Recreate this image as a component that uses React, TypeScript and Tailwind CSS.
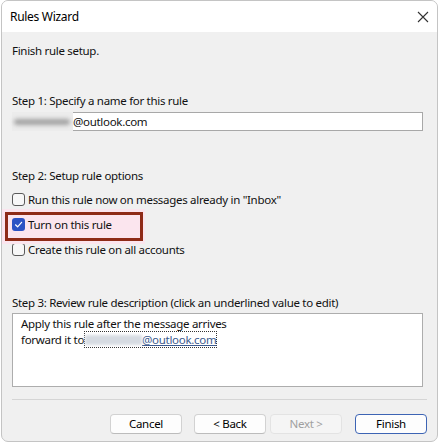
import React from 'react';

const font = { fontFamily: '"Noto Sans", "Liberation Sans", sans-serif' };

const CheckRow = ({ label, checked }: { label: string; checked?: boolean }) => (
  <div className="flex h-[25px] items-center gap-[3px]">
    {checked ? (
      <span className="flex h-[13px] w-[13px] items-center justify-center rounded-[3px] bg-[#2b52c4]">
        <svg width="9" height="9" viewBox="0 0 9 9" fill="none">
          <path d="M1.5 4.8 L3.6 6.8 L7.6 2.3" stroke="white" strokeWidth="1.2" strokeLinecap="round" strokeLinejoin="round" />
        </svg>
      </span>
    ) : (
      <span className="h-[13px] w-[13px] rounded-[3px] border border-[#5a5a5a] bg-[#f7f7f7]" />
    )}
    <span>{label}</span>
  </div>
);

const Btn = ({ label, primary, disabled }: { label: string; primary?: boolean; disabled?: boolean }) => (
  <button
    className={`h-[20px] w-[72px] rounded-[4px] border text-[11.5px] leading-none ${
      primary
        ? 'border-[#3d64b4] bg-[#fdfdfd] text-black'
        : disabled
          ? 'border-[#e3e3e3] bg-[#f5f5f5] text-[#a0a0a0]'
          : 'border-[#d2d2d2] border-b-[#bcbcbc] bg-[#fdfdfd] text-black'
    }`}
  >
    {label}
  </button>
);

export default function App() {
  return (
    <div className="h-[446px] w-[439px] bg-white text-[11.5px] tracking-[-0.3px] text-[#111]" style={font}>
      <div className="ml-[1px] flex h-[442px] w-[437px] flex-col overflow-hidden rounded-[7px] border border-[#c4c4c4] bg-[#f0f0f0]">
        <div className="flex h-[31px] shrink-0 items-center justify-between bg-white pl-[8px] pr-[8px]">
          <span className="text-[12px] text-black">Rules Wizard</span>
          <svg width="12" height="12" viewBox="0 0 12 12" className="text-[#333]">
            <path d="M1 1 L11 11 M11 1 L1 11" stroke="currentColor" strokeWidth="1.1" />
          </svg>
        </div>

        <div className="relative flex flex-col pl-[10px] leading-[16px]">
          <div className="mt-[11px]">Finish rule setup.</div>

          <div className="mt-[34px]">Step 1: Specify a name for this rule</div>
          <div className="mt-[3px] flex h-[19px] w-[411px] items-stretch">
            <div className="flex w-[61px] items-center bg-[#ececec]">
              <span className="ml-[2px] h-[6px] w-[56px] rounded-full bg-[#a2a2a2] blur-[2px]" />
            </div>
            <div className="flex flex-1 items-center border border-[#a8a8a8] border-l-0 bg-white">
              <span>@outlook.com</span>
            </div>
          </div>

          <div className="mt-[37px]">Step 2: Setup rule options</div>
          <div className="mt-[3px] flex flex-col">
            <CheckRow label={'Run this rule now on messages already in "Inbox"'} />
            <div className="relative">
              <div className="absolute -left-[10px] -top-[3px] h-[35px] w-[143px] bg-[#fbe5ee]" />
              <div className="absolute -left-[7px] top-0 h-[29px] w-[138px] border-[3px] border-[#8e2b17]" />
              <div className="relative">
                <CheckRow label="Turn on this rule" checked />
              </div>
            </div>
            <CheckRow label="Create this rule on all accounts" />
          </div>

          <div className="mt-[33px]">Step 3: Review rule description (click an underlined value to edit)</div>
          <div className="mt-[2px] h-[74px] w-[411px] border border-[#adadad] bg-white pl-[8px] pt-[2px] leading-[15px]">
            <div>Apply this rule after the message arrives</div>
            <div className="flex items-center">
              <span>forward it to</span>
              <span className="flex items-center border border-dotted border-[#333]">
                <span className="h-[10px] w-[57px] bg-[#d6dbe2] blur-[1.5px]" />
                <span className="text-[#3c5a8e] underline">@outlook.com</span>
              </span>
            </div>
          </div>

          <div className="mt-[12px] h-px w-[415px] bg-[#d5d5d5]" />

          <div className="mt-[14px] flex w-[415px] justify-end">
            <Btn label="Cancel" />
            <div className="ml-[12px]">
              <Btn label="< Back" />
            </div>
            <div className="ml-[4px]">
              <Btn label="Next >" disabled />
            </div>
            <div className="ml-[13px]">
              <Btn label="Finish" primary />
            </div>
          </div>
        </div>
      </div>
    </div>
  );
}
